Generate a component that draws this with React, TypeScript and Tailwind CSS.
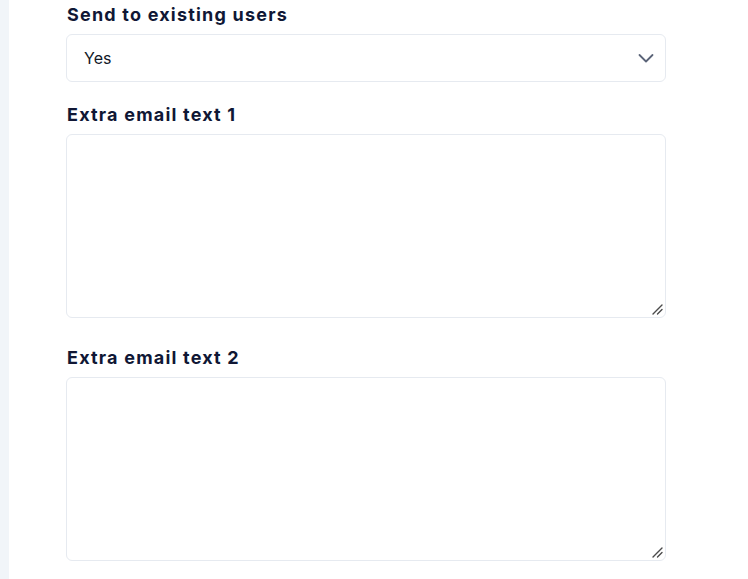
import React from "react";

function Handle() {
  return (
    <svg className="pointer-events-none absolute bottom-[3px] right-[3px]" width="12" height="12" viewBox="0 0 12 12" fill="none">
      <path d="M2 11L11 2M6.5 11L11 6.5" stroke="#4b4b4b" strokeWidth="1.4" strokeLinecap="round" />
    </svg>
  );
}

export default function App() {
  const label = "ml-[1px] block pt-[1px] text-[18px] font-bold leading-6 tracking-[1.2px] text-[#101735]";
  return (
    <div className="flex min-h-[579px] w-[748px] bg-white" style={{ fontFamily: "Inter, 'Noto Sans', sans-serif" }}>
      <div className="w-[9px] shrink-0 bg-[#f1f5f9]" />
      <div className="w-[600px] pl-[57px] box-content">
        <div className="pt-[2px]">
          <label className={label}>Send to existing users</label>
          <div className="relative mt-[7px]">
            <select className="block h-[48px] w-full appearance-none rounded-md border border-[#e6eaf0] bg-white pl-[17px] text-[16px] text-[#111827] outline-none">
              <option>Yes</option>
            </select>
            <svg className="pointer-events-none absolute right-[12px] top-[16px]" width="16" height="16" viewBox="0 0 16 16" fill="none">
              <path d="M1.5 5l6.5 6.5L14.5 5" stroke="#5b6478" strokeWidth="1.8" strokeLinecap="round" strokeLinejoin="round" />
            </svg>
          </div>
        </div>
        <div className="mt-[20px]">
          <label className={label}>Extra email text 1</label>
          <div className="relative mt-[7px]">
            <textarea className="block h-[184px] w-full resize-none rounded-md border border-[#e6eaf0] bg-white outline-none" />
            <Handle />
          </div>
        </div>
        <div className="mt-[27px]">
          <label className={label}>Extra email text 2</label>
          <div className="relative mt-[7px]">
            <textarea className="block h-[184px] w-full resize-none rounded-md border border-[#e6eaf0] bg-white outline-none" />
            <Handle />
          </div>
        </div>
      </div>
    </div>
  );
}
